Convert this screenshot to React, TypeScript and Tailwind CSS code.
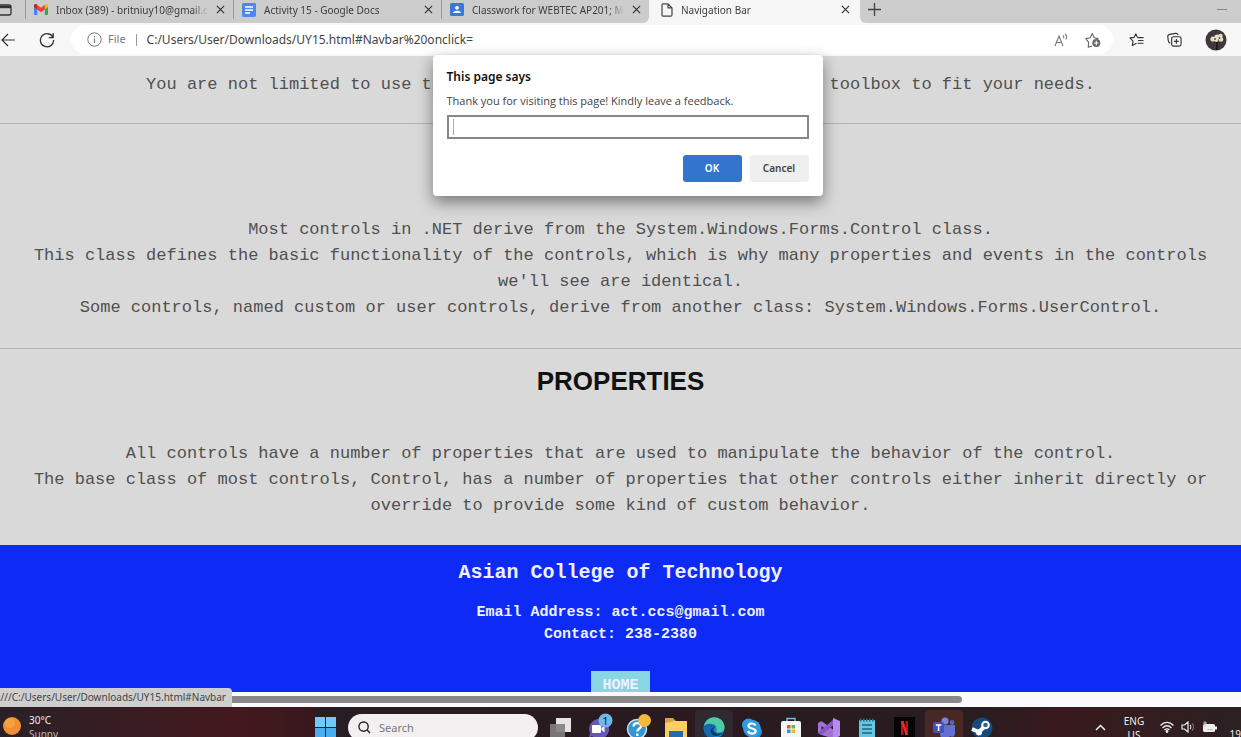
import React from "react";

const ui = "font-['Noto_Sans','Open_Sans',sans-serif]";
const mono = "font-['Liberation_Mono',monospace]";

function CloseIcon() {
  return (
    <svg viewBox="0 0 10 10" className="size-[9px]" fill="none" stroke="#333" strokeWidth="1.3">
      <path d="M1 1l8 8M9 1l-8 8" />
    </svg>
  );
}

function GmailIcon() {
  return (
    <svg viewBox="0 0 14 11" className="h-[11px] w-[14px] shrink-0">
      <path d="M0 1.5V10a1 1 0 0 0 1 1h2.2V4.2z" fill="#4285f4" />
      <path d="M14 1.5V10a1 1 0 0 1-1 1h-2.2V4.2z" fill="#34a853" />
      <path d="M10.8.8v4.6L14 3V1.4C14 .2 12.600-.4 11.600.3z" fill="#fbbc04" />
      <path d="M3.200.8v4.600L7 8.200l3.800-2.800V.8L7 3.700z" fill="#ea4335" />
      <path d="M0 1.400V3l3.200 2.400V.8L2.400.3C1.400-.4 0 .2 0 1.400z" fill="#c5221f" />
    </svg>
  );
}

function DocsIcon() {
  return (
    <svg viewBox="0 0 14 14" className="size-[14px] shrink-0">
      <rect width="14" height="14" rx="1.5" fill="#4f86ec" />
      <path d="M3 4h8M3 7h8M3 10h5" stroke="#fff" strokeWidth="1.500" />
    </svg>
  );
}

function ClassroomIcon() {
  return (
    <svg viewBox="0 0 14 13" className="h-[13px] w-[14px] shrink-0">
      <rect width="14" height="13" rx="1.500" fill="#3b76dc" />
      <circle cx="7" cy="4.800" r="1.900" fill="#fff" />
      <path d="M3 10c0-3 8-3 8 0z" fill="#fff" />
    </svg>
  );
}

function FileIcon() {
  return (
    <svg viewBox="0 0 12 14" className="h-[14px] w-[12px] shrink-0" fill="none" stroke="#444" strokeWidth="1.200" strokeLinejoin="round">
      <path d="M2 .8h5L11 4.800v7.200a1.200 1.200 0 0 1-1.200 1.200H2.200A1.200 1.200 0 0 1 1 12V2A1.200 1.200 0 0 1 2 .8zM7 .8v4h4" />
    </svg>
  );
}

type TabProps = { icon: React.ReactNode; title: string; active?: boolean };

function Tab({ icon, title, active }: TabProps) {
  return (
    <div
      className={
        active
          ? "flex h-full w-[211px] items-center gap-2 bg-[#f6f6f6] pr-2.5 pb-1 pl-3"
          : "mb-1 flex h-[19px] w-[208px] items-center gap-2 border-l border-[#999] pr-2 pl-2"
      }
    >
      {icon}
      <span className="flex-1 overflow-hidden mask-r-from-90% text-[10px] leading-4 whitespace-nowrap text-[#3c3c3c]">{title}</span>
      <button aria-label={"Close " + title} className="flex">
        <CloseIcon />
      </button>
    </div>
  );
}

function TabStrip() {
  return (
    <div className="flex h-[23px] shrink-0 overflow-hidden bg-[#f6f6f6]">
      <div className="flex items-center rounded-br-md bg-[#ccc]">
        <button aria-label="Tab actions" className="w-[25px] pb-1">
          <svg viewBox="0 0 12 12" className="h-[12px] w-[12px]" fill="none" stroke="#333" strokeWidth="1.300">
            <rect x="-2" y="1" width="13" height="10" rx="2" />
            <path d="M-2 3h13" strokeWidth="2.400" />
          </svg>
        </button>
        <Tab icon={<GmailIcon />} title="Inbox (389) - britniuy10@gmail.com" />
        <Tab icon={<DocsIcon />} title="Activity 15 - Google Docs" />
        <Tab icon={<ClassroomIcon />} title="Classwork for WEBTEC AP201; MWF" />
      </div>
      <Tab icon={<FileIcon />} title="Navigation Bar" active />
      <div className="flex flex-1 items-center justify-between rounded-bl-md bg-[#ccc] pr-3.5 pb-1 pl-2">
        <button aria-label="New tab">
          <svg viewBox="0 0 13 13" className="size-[13px]" stroke="#444" strokeWidth="1.300">
            <path d="M6.500 0v13M0 6.500h13" />
          </svg>
        </button>
        <button aria-label="Minimize" className="h-px w-[10px] bg-[#888]" />
      </div>
    </div>
  );
}

function Toolbar() {
  return (
    <div className="flex h-[34px] shrink-0 items-center border-b border-[#d8d8d8] bg-[#f7f7f7] pr-3.5">
      <button aria-label="Back" className="w-[39px]">
        <svg viewBox="0 0 16 14" className="h-[14px] w-[16px]" fill="none" stroke="#333" strokeWidth="1.200">
          <path d="M15 7H2M8 1L2 7l6 6" />
        </svg>
      </button>
      <button aria-label="Refresh" className="mr-4">
        <svg viewBox="0 0 16 16" className="size-[16px]" fill="none" stroke="#333" strokeWidth="1.300">
          <path d="M14 5.500A6.600 6.600 0 1 0 14.600 8M14.200 1v4.600H9.800" />
        </svg>
      </button>
      <div className="flex h-[29px] flex-1 items-center rounded-full bg-white pr-3 pl-4">
        <svg viewBox="0 0 15 15" className="mr-1.5 size-[15px]" fill="none" stroke="#777">
          <circle cx="7.500" cy="7.500" r="6.700" />
          <path d="M7.500 6.500v4.500M7.500 4v1.200" strokeWidth="1.200" />
        </svg>
        <span className="text-[11px] text-[#777]">File</span>
        <span className="mx-2.5 h-3 w-px bg-[#999]" />
        <input
          aria-label="Address"
          readOnly
          value="C:/Users/User/Downloads/UY15.html#Navbar%20onclick="
          className="min-w-0 flex-1 bg-transparent text-[12px] text-[#444] outline-none"
        />
        <button aria-label="Read aloud" className="mr-4">
          <svg viewBox="0 0 15 14" className="h-[14px] w-[15px]" fill="none" stroke="#777" strokeWidth="1.100">
            <path d="M1 13L5 3l4 10M2.500 9.500h5M9 2.500c1 .8 1 2 .6 3M11 1c1.800 1.500 1.800 4 .8 5.500" />
          </svg>
        </button>
        <button aria-label="Add to favorites">
          <svg viewBox="0 0 16 16" className="size-[16px]" fill="none" stroke="#666" strokeWidth="1.100" strokeLinejoin="round">
            <path d="M7 14l-3.800 1.200.5-4.800L.8 6.600l4.400-.8L7.200 1.600l2 4.200 4.200.8" />
            <circle cx="11.300" cy="11" r="4" fill="#666" stroke="none" />
            <path d="M11.300 8.800v4.400M9.100 11h4.400" stroke="#fff" />
          </svg>
        </button>
      </div>
      <div className="flex items-center gap-[23px] pl-4">
        <button aria-label="Favorites">
          <svg viewBox="0 0 16 16" className="size-[15px]" fill="none" stroke="#333" strokeWidth="1.200" strokeLinejoin="round">
            <path d="M8 12l-4.500 2.500.8-4.800L1 6.300l4.400-.6L7.200 2l1.800 3.600M9 6h6.500M9.500 9h6M9 12h6.500" />
          </svg>
        </button>
        <button aria-label="Collections">
          <svg viewBox="0 0 16 16" className="size-[15px]" fill="none" stroke="#333" strokeWidth="1.200">
            <rect x="5" y="5" width="10" height="10" rx="2" />
            <path d="M10 7.500v5M7.500 10h5M3.500 12C2 11.500 1.500 10.500 1.300 9L.8 5C.7 3.500 1.500 2.800 3 2.500l6-1c1.600-.2 2.500.5 2.800 1.800" />
          </svg>
        </button>
        <button aria-label="Profile">
          <svg viewBox="0 0 22 22" className="size-[22px]">
            <circle cx="11" cy="11" r="10.500" fill="#40363c" />
            <path d="M12 11v10" stroke="#15100f" strokeWidth="1.500" />
            <g fill="#e5dfc9">
              <circle cx="8" cy="10" r="2.600" />
              <circle cx="12" cy="8" r="2.600" />
              <circle cx="15.500" cy="7" r="2.200" />
              <circle cx="16" cy="10.500" r="2.300" />
              <circle cx="11.500" cy="11" r="1.900" />
            </g>
            <g fill="#6a5d3c">
              <circle cx="10" cy="10" r="1" />
              <circle cx="14.500" cy="9" r="1" />
            </g>
          </svg>
        </button>
      </div>
    </div>
  );
}

function Prompt() {
  return (
    <div className="absolute inset-x-0 top-[55px] flex justify-center pl-3.5">
      <form
        role="dialog"
        aria-labelledby="prompt-title"
        onSubmit={(e) => e.preventDefault()}
        className="flex h-[141px] w-[390px] flex-col rounded bg-white px-3.5 pt-3 text-[#444] shadow-[0_6px_16px_rgba(0,0,0,0.45)]"
      >
        <h2 id="prompt-title" className="text-[12px] leading-5 font-semibold text-[#111]">This page says</h2>
        <label htmlFor="feedback" className="mt-1 font-['Open_Sans',sans-serif] text-[11px] leading-5">
          Thank you for visiting this page! Kindly leave a feedback.
        </label>
        <div className="mt-1 flex h-[24px] items-center border-2 border-[#85888c] px-1">
          <span className="h-4 w-px bg-[#aaa]" />
          <input id="feedback" className="w-full bg-transparent text-[11px] outline-none" />
        </div>
        <div className="mt-4 flex justify-end gap-2 text-[10px] font-semibold">
          <button className="h-[27px] w-[59px] rounded-[3px] bg-[#3274ce] text-white">OK</button>
          <button className="h-[27px] w-[59px] rounded-[3px] bg-[#efefef]">Cancel</button>
        </div>
      </form>
    </div>
  );
}

function Page() {
  return (
    <main className={`min-h-0 flex-1 overflow-hidden bg-[#d9d9d9] text-center text-[17px] leading-[26px] text-[#505050] ${mono}`}>
      <p className="mt-[15px]">
        You are not limited to use the given controls, you may change your toolbox to fit your needs.
      </p>
      <hr className="mt-[25px] border-[#b5b5b5]" />
      <p className="mt-[93px] px-4">
        Most controls in .NET derive from the System.Windows.Forms.Control class.
        <br />
        This class defines the basic functionality of the controls, which is why many properties and events in the controls we'll see are identical.
        <br />
        Some controls, named custom or user controls, derive from another class: System.Windows.Forms.UserControl.
      </p>
      <hr className="mt-[27px] border-[#b5b5b5]" />
      <h1 className="mt-4 font-['Liberation_Sans',sans-serif] text-[26px] leading-8 font-bold text-[#111]">PROPERTIES</h1>
      <p className="mt-11 px-4">
        All controls have a number of properties that are used to manipulate the behavior of the control.
        <br />
        The base class of most controls, Control, has a number of properties that other controls either inherit directly or override to provide some kind of custom behavior.
      </p>
      <footer className="mt-[26px] bg-[#0d2bf5] pt-[15px] pb-10 text-[15px] leading-[22px] font-bold text-[#eef0ff]">
        <h2 className="text-[20px] leading-[26px]">Asian College of Technology</h2>
        <p className="mt-4">
          Email Address: act.ccs@gmail.com
          <br />
          Contact: 238-2380
        </p>
        <a href="#home" className="mt-[25px] inline-block bg-[#88d6e4] px-[11px] py-1">HOME</a>
      </footer>
    </main>
  );
}

const icon = "size-[22px]";

function TaskIcons() {
  return (
    <>
      <svg viewBox="0 0 22 22" className={icon}>
        <rect x="6" y="1" width="15" height="14" fill="#e4e4e4" />
        <rect x="0" y="7" width="15" height="13" fill="#7f8080" fillOpacity=".9" />
      </svg>
      <svg viewBox="0 0 22 22" className="size-[22px] overflow-visible">
        <path d="M11 2a10 10 0 1 1-7 17l-3 2 1-5A10 10 0 0 1 11 2z" fill="#6759b3" />
        <rect x="4" y="8" width="9" height="8" rx="1" fill="#fff" />
        <path d="M13.500 11l3-2.500v7l-3-2.500z" fill="#fff" />
        <circle cx="17.500" cy="3.500" r="7" fill="#70b8ec" />
        <text x="17.500" y="7.500" textAnchor="middle" fontSize="11" fill="#10233a">1</text>
      </svg>
      <svg viewBox="0 0 22 22" className="size-[22px] overflow-visible">
        <circle cx="10" cy="12" r="9.500" fill="#3594d5" stroke="#c8e0ee" strokeWidth="1.500" />
        <path d="M6.500 9.500c0-4.500 7.500-4.500 7.500-.5 0 3-3.700 2.500-3.700 5.500M10.300 16.500v2.500" fill="none" stroke="#fff" strokeWidth="2.300" />
        <circle cx="17.500" cy="3.500" r="6.500" fill="#f2b93c" />
      </svg>
      <svg viewBox="0 0 22 22" className={icon}>
        <path d="M0 1h8l3 3h11v18H0z" fill="#dca139" />
        <path d="M0 6l9-2h13v18H0z" fill="#f9cf62" />
        <path d="M4 14h14v8H4z" fill="#246ca8" />
      </svg>
      <span className="-mx-2 flex h-full justify-center rounded-t bg-[#302a30] px-2">
        <svg viewBox="0 0 22 22" className={icon + " mt-[7px]"}>
          <circle cx="11" cy="11" r="10.500" fill="#1682cd" />
          <path d="M1 9C3-2 19-3 21.500 9c.5 5-3 7-7 6.500-2-.3-1-1.500-.7-2.500C14 8 6 5 1 9z" fill="#4fcba4" />
          <path d="M1 9c5-4 11-2 12.500 1-5-.8-7 3-5.500 6.500 2 4 7 4.500 11 2C10 26-1 20 1 9z" fill="#1766b0" />
          <path d="M13.500 10c-3 0-4 3-2.700 4.500 2 2.500 6 2.500 9 1-2 4-9 5-11.500 1-2-3.500 0-7 5.200-6.500z" fill="#183b5a" />
        </svg>
      </span>
      <svg viewBox="0 0 22 22" className={icon}>
        <circle cx="7.500" cy="8" r="6.500" fill="#2b9ee4" />
        <circle cx="14.500" cy="15" r="6.500" fill="#2b8bd5" />
        <circle cx="11" cy="11.500" r="8.800" fill="#2f9be1" />
        <path d="M14.500 8.500C13 5.500 7.500 6 7.500 9s7.200 2 7.200 5-6 4-7.700 0" fill="none" stroke="#fff" strokeWidth="2.200" />
      </svg>
      <svg viewBox="0 0 22 22" className={icon}>
        <path d="M7 5V1.500h8V5" fill="none" stroke="#74bae0" strokeWidth="1.500" />
        <rect x="1" y="4" width="20" height="18" rx="2" fill="#f4f5f5" />
        <path d="M7 8h3.500v3.500H7z" fill="#e35a3b" />
        <path d="M11.500 8H15v3.500h-3.500z" fill="#7cb342" />
        <path d="M7 12.500h3.500V16H7z" fill="#2698d8" />
        <path d="M11.500 12.500H15V16h-3.500z" fill="#f3b72e" />
      </svg>
      <svg viewBox="0 0 22 22" className={icon}>
        <path d="M0 6l3.500-2L17 14v8L3.500 18 0 16zM3.500 9v4L6 11z" fill="#a071d6" fillRule="evenodd" />
        <path d="M0 16l3.500 2L17 7V1z" fill="#8956c4" />
        <path d="M15 1l7 3v15l-7 3z" fill="#b78beb" />
      </svg>
      <svg viewBox="0 0 22 22" className={icon}>
        <rect x="3" y="3" width="16" height="19" rx="1" fill="#65c7e4" />
        <path d="M4 3h14" stroke="#276d88" strokeWidth="3" strokeDasharray="1.500 1.500" />
        <path d="M6 8h10M6 12h10M6 16h10" stroke="#216680" strokeWidth="1.400" />
      </svg>
      <svg viewBox="0 0 22 22" className={icon}>
        <rect x="0" y="0" width="21" height="22" fill="#050505" />
        <path d="M7 4h2.500v14H7zM11.500 4H14v14h-2.500z" fill="#b7161d" />
        <path d="M7 4h2.500L14 18h-2.500z" fill="#ef2930" />
      </svg>
      <span className="-mx-2 flex h-full justify-center rounded-t bg-[#482725] px-2">
        <svg viewBox="0 0 22 22" className={icon + " mt-[7px]"}>
          <circle cx="12" cy="4" r="3.500" fill="#7c86e6" />
          <circle cx="19" cy="5.500" r="2.400" fill="#5660c6" />
          <path d="M7 8h15v8c0 5-4 4-5 3-2 4-10 4-10-2z" fill="#646fd5" />
          <rect x="0" y="5" width="11" height="11" rx="1.500" fill="#4651b3" />
          <path d="M2.800 8h5.600M5.600 8v6" stroke="#fff" strokeWidth="1.500" />
        </svg>
      </span>
      <svg viewBox="0 0 22 22" className={icon}>
        <circle cx="11" cy="11" r="10.500" fill="#164a79" />
        <path d="M1 12l7 3 5-5" fill="none" stroke="#fff" strokeWidth="4" />
        <circle cx="14.500" cy="8" r="4.300" fill="#fff" />
        <circle cx="14.500" cy="8" r="2.300" fill="#2c668f" />
        <circle cx="8" cy="15.500" r="3" fill="#fff" />
      </svg>
    </>
  );
}

function Taskbar() {
  return (
    <div className="flex h-[30px] shrink-0 items-start overflow-hidden bg-linear-to-r from-[#29202a] via-[#281a1e] to-[#2b1e21] text-[10px] leading-[14px] text-[#eee]">
      <div className="flex h-full flex-1 gap-2 bg-linear-to-r from-[#292027] via-[#44181e] via-75% to-[#38181d] pt-1.5 pl-[3px]">
        <svg viewBox="0 0 18 18" className="mt-1 size-[18px]">
          <circle cx="9" cy="9" r="9" fill="#ef8f34" />
          <circle cx="7" cy="6" r="5" fill="#f5ac45" fillOpacity=".7" />
        </svg>
        <div>
          30°C
          <br />
          <span className="text-[#bbb]">Sunny</span>
        </div>
      </div>
      <div className="flex h-[38px] w-[678px] shrink-0 items-start gap-3 pt-[3px]">
        <button aria-label="Start" className="mt-[7px]">
          <svg viewBox="0 0 21 21" className="size-[21px]">
            <path d="M0 0h10v10H0zM11 0h10v10H11z" fill="#6dccf7" />
            <path d="M0 11h10v10H0zM11 11h10v10H11z" fill="#4aaded" />
          </svg>
        </button>
        <label className="mt-1 flex h-[27px] w-[190px] items-center gap-2 rounded-full bg-[#f3eff0] px-2.5">
          <svg viewBox="0 0 14 14" className="size-[13px]" fill="none" stroke="#222" strokeWidth="1.500">
            <circle cx="6" cy="6" r="5" />
            <path d="M9.500 9.500L13 13" />
          </svg>
          <input aria-label="Search" placeholder="Search" className="w-0 flex-1 bg-transparent text-[11px] outline-none placeholder:text-[#777]" />
        </label>
        <div className="flex h-[36px] flex-1 items-center justify-between">
          <TaskIcons />
        </div>
      </div>
      <div className="flex h-full w-[248px] shrink-0 items-start bg-linear-to-r from-[#2b1c20] via-[#39191d] via-25% to-[#2b2022] pl-[102px]">
        <button aria-label="Show hidden icons" className="mt-[17px] mr-4">
          <svg viewBox="0 0 11 7" className="h-[7px] w-[11px]" fill="none" stroke="#eee" strokeWidth="1.500">
            <path d="M1 6l4.500-4.500L10 6" />
          </svg>
        </button>
        <span className="mt-[7px] w-6 text-center">
          ENG
          <br />
          US
        </span>
        <div className="mt-3.5 ml-3.5 flex items-center gap-[7px]">
          <svg viewBox="0 0 14 12" className="h-[12px] w-[14px]" fill="none" stroke="#eee" strokeWidth="1.300">
            <path d="M.5 4.500c4-4 9-4 13 0M2.500 7c3-3 6-3 9 0M4.500 9c1.700-1.500 3.300-1.500 5 0" />
            <circle cx="7" cy="10.500" r=".8" fill="#eee" />
          </svg>
          <svg viewBox="0 0 14 12" className="h-[12px] w-[14px]" fill="none" stroke="#eee" strokeWidth="1.200">
            <path d="M1 4h2.500L7 1v10L3.500 8H1zM9 4c1 1 1 3 0 4" />
            <path d="M11 2.500c2 2 2 5 0 7" stroke="#776" />
          </svg>
          <svg viewBox="0 0 15 12" className="h-[12px] w-[15px]">
            <rect x="1" y="3" width="12" height="8" rx="1.500" fill="#eee" />
            <path d="M13 5.500h2v3h-2z" fill="#eee" />
            <path d="M3 0v6M1 2h4M5.500 8.500h5" stroke="#cbb" />
          </svg>
        </div>
        <span className="mt-5 ml-auto">19</span>
      </div>
    </div>
  );
}

export default function App() {
  return (
    <div className={`relative flex h-screen flex-col overflow-hidden ${ui}`}>
      <TabStrip />
      <Toolbar />
      <Page />
      <div className="relative flex h-[15px] shrink-0 items-center bg-[#fafafa]">
        <div className="h-[7px] w-[962px] rounded-r-full bg-[#898989]" />
        <div className="absolute bottom-0 left-0 h-[19px] w-[232px] overflow-hidden rounded-tr bg-[#cfcfcf] text-[10px] leading-[18px] text-[#444]">
          <span className="flex justify-end pr-1.5 whitespace-nowrap">file:///C:/Users/User/Downloads/UY15.html#Navbar</span>
        </div>
      </div>
      <Taskbar />
      <Prompt />
    </div>
  );
}
